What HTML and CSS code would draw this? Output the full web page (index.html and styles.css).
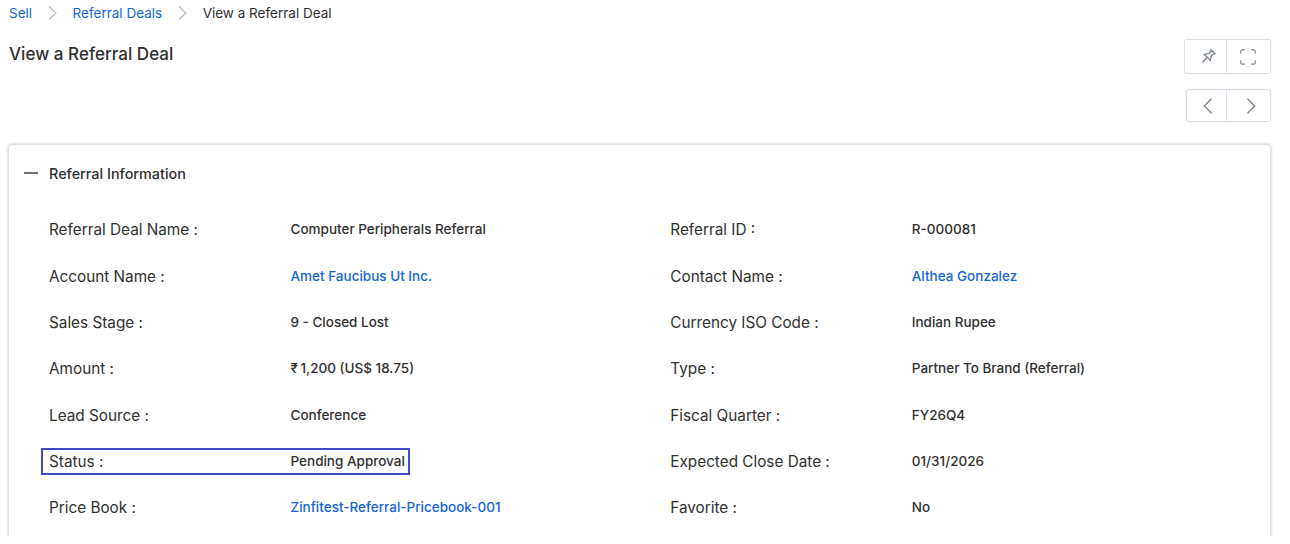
FILE: index.html
```html
<!DOCTYPE html>
<html lang="en">
<head>
<meta charset="utf-8">
<title>View a Referral Deal</title>
<link rel="stylesheet" href="styles.css">
</head>
<body>
<main class="page">
  <nav class="crumbs">
    <a href="#">Sell</a>
    <svg class="sep" viewBox="0 0 9 14"><path d="M1 .5 8 7 1 13.5"/></svg>
    <a href="#" class="crumb-deals">Referral Deals</a>
    <svg class="sep" viewBox="0 0 9 14"><path d="M1 .5 8 7 1 13.5"/></svg>
    <span class="crumb-now">View a Referral Deal</span>
  </nav>
  <header class="head">
    <h1 class="title">View a Referral Deal</h1>
    <div class="tools">
      <div class="group group-top">
        <button class="btn btn-pin" aria-label="Pin"><svg width="16" height="16" viewBox="0 0 16 16"><path d="M9.5 1.300 14.500 6.200M10.200 2 8.200 5.400 3.400 6.400 9.300 12.300 10.300 7.600 13.800 5.500M6.100 9.500 1.400 14.300"/></svg></button>
        <button class="btn btn-full" aria-label="Full screen"><svg class="dim" width="18" height="18" viewBox="0 0 18 18"><path d="M1.700 5.800V3.700q0-2 2-2H6M12 1.700h2.300q2 0 2 2V5.800M16.300 12.200v2.100q0 2-2 2H12M6 16.300H3.700q-2 0-2-2V12.200"/></svg></button>
      </div>
      <div class="group group-nav">
        <button class="btn btn-prev" aria-label="Previous"><svg width="10" height="16" viewBox="0 0 10 16"><path d="M8.500 .8 1.300 8l7.200 7.200"/></svg></button>
        <button class="btn btn-next" aria-label="Next"><svg width="10" height="16" viewBox="0 0 10 16"><path d="M1.500 .8 8.700 8l-7.200 7.200"/></svg></button>
      </div>
    </div>
  </header>
  <section class="card">
    <h2 class="section"><span class="minus"></span>Referral Information</h2>
    <div class="fields">
      <div class="row"><span class="label">Referral Deal Name :</span><span class="value">Computer Peripherals Referral</span></div>
      <div class="row"><span class="label">Referral ID :</span><span class="value">R-000081</span></div>
      <div class="row"><span class="label">Account Name :</span><a href="#" class="value">Amet Faucibus Ut Inc.</a></div>
      <div class="row"><span class="label">Contact Name :</span><a href="#" class="value">Althea Gonzalez</a></div>
      <div class="row"><span class="label">Sales Stage :</span><span class="value">9 - Closed Lost</span></div>
      <div class="row"><span class="label">Currency ISO Code :</span><span class="value">Indian Rupee</span></div>
      <div class="row"><span class="label">Amount :</span><span class="value"><span class="rupee">₹</span>1,200 (US$ 18.75)</span></div>
      <div class="row"><span class="label">Type :</span><span class="value">Partner To Brand (Referral)</span></div>
      <div class="row"><span class="label">Lead Source :</span><span class="value">Conference</span></div>
      <div class="row"><span class="label">Fiscal Quarter :</span><span class="value">FY26Q4</span></div>
      <div class="row marked"><span class="label">Status :</span><span class="value">Pending Approval</span></div>
      <div class="row"><span class="label">Expected Close Date :</span><span class="value">01/31/2026</span></div>
      <div class="row"><span class="label">Price Book :</span><a href="#" class="value">Zinfitest-Referral-Pricebook-001</a></div>
      <div class="row"><span class="label">Favorite :</span><span class="value">No</span></div>
    </div>
  </section>
</main>
</body>
</html>
```
FILE: styles.css
```css
*, *::after { box-sizing: border-box; }
body {
  margin: 0;
  background: #fff;
  color: #2f2f2f;
  font-family: Inter, "Liberation Sans", sans-serif;
}
a { color: #1565d8; text-decoration: none; }
svg { fill: none; stroke: #7d8590; stroke-width: 1.4; display: block; }
.page {
  height: 536px;
  overflow: hidden;
  padding: 0 19px 0 8px;
}
.crumbs {
  display: flex;
  align-items: center;
  height: 26px;
  padding-left: 1px;
  font-size: 13.500px;
  white-space: nowrap;
}
.sep { width: 9px; height: 14px; margin: 0 15.500px 0 16px; stroke: #b4b8bf; stroke-width: 1.1; }
.head {
  display: flex;
  justify-content: space-between;
  height: 118px;
  padding: 13px 0 0 1px;
}
.title { margin: 5px 0 0; font-size: 17px; line-height: 20px; font-weight: 500; letter-spacing: 0.03px; }
.tools { display: flex; flex-direction: column; align-items: flex-end; gap: 15px; }
.group { display: flex; border: 1px solid #d9dfe9; border-radius: 3px; box-shadow: 0 0 1px #d9dfe9; }
.group-top { width: 87px; height: 35px; }
.group-nav { width: 85px; height: 33px; }
.btn {
  display: flex;
  align-items: center;
  justify-content: center;
  flex: 1;
  padding: 0;
  border: 0;
  background: none;
}
.btn + .btn { flex: 0 0 44px; border-left: 1px solid #d9dfe9; }
.btn-pin { padding-left: 7px; }
.btn-pin svg { margin-top: -2px; }
.btn-full { padding-right: 1px; }
.btn-next { padding-left: 4px; }
.btn-prev { padding-left: 2px; }
.dim { stroke: #9b9fa5; }
.card {
  height: 420px;
  padding: 18px 0 0 15px;
  border: 1px solid #e2e2e2;
  border-radius: 4px;
  box-shadow: 0 0 2px 1px #e4e4e4;
}
.section {
  display: flex;
  align-items: center;
  gap: 11px;
  height: 20px;
  margin: 0 0 23.800px;
  font-size: 14.400px;
  font-weight: 500;
}
.minus { width: 14px; height: 2px; background: #707070; }
.fields {
  display: grid;
  grid-template-columns: 621.300px 600px;
  grid-auto-rows: 46.300px;
  padding-left: 25px;
}
.row { position: relative; display: grid; grid-template-columns: 241.500px 1fr; align-items: center; white-space: nowrap; }
.label { font-size: 15.300px; }
.value { font-size: 13.500px; font-weight: 500; padding-bottom: 1px; }
.rupee { display: inline-block; width: 10px; }
.marked::after {
  content: "";
  position: absolute;
  left: -8px;
  top: 9.500px;
  width: 369px;
  height: 27px;
  border: 2px solid #4149c8;
}
```
